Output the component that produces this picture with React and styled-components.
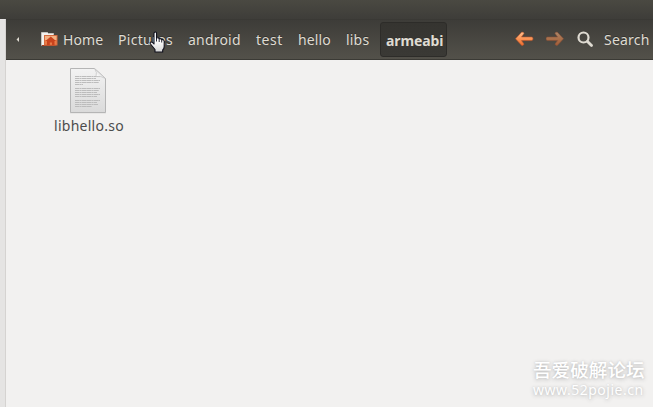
import React from 'react';
import styled, { createGlobalStyle } from 'styled-components';

const Global = createGlobalStyle`
  * { box-sizing: border-box; }
  body { margin: 0; overflow: hidden; font-family: "Noto Sans", "Open Sans", sans-serif; }
  svg { display: block; flex: none; }
`;

const Window = styled.div`
  position: relative;
  width: 653px;
  height: 407px;
  display: flex;
  flex-direction: column;
  background: #f2f1f0;
`;

const TitleBar = styled.header`
  height: 19px;
  flex: none;
  background: linear-gradient(#4a4942, #3e3d39);
`;

const Body = styled.div`
  flex: 1;
  display: flex;
`;

const Sidebar = styled.aside`
  width: 6px;
  flex: none;
  background: #e5e4e3;
  border-right: 1px solid #d5d3d1;
`;

const Main = styled.main`
  flex: 1;
  min-width: 0;
`;

const Toolbar = styled.nav`
  height: 41px;
  display: flex;
  align-items: flex-start;
  padding-top: 2px;
  border-top: 1px solid #3a3935;
  border-bottom: 1px solid #3b3a35;
  background: linear-gradient(#3d3c38, #53514a);
  color: #dfdbd2;
`;

const Scroll = styled.div`
  width: 35px;
  height: 36px;
  padding: 15px 0 0 10px;
`;

const Crumb = styled.div`
  width: ${p => p.$width}px;
  height: 36px;
  flex: none;
  display: flex;
  gap: 5px;
  white-space: nowrap;
  font-size: 14px;
  line-height: 36px;
  letter-spacing: ${p => p.$spacing || 0}px;
  text-shadow: 0 -1px #33322e;
`;

const Current = styled(Crumb)`
  height: 35px;
  padding-left: 5px;
  border: 1px solid #2d2c29;
  border-radius: 3px;
  background: linear-gradient(#353430, #3a3935);
  font-weight: 700;
  line-height: 35px;
`;

const HomeIconBox = styled.span`
  padding-top: 10px;
`;

const Tools = styled.div`
  display: flex;
  align-items: flex-start;
  margin-left: 68px;
`;

const ToolIcon = styled.div`
  width: ${p => p.$width}px;
  padding-top: 9px;
  opacity: ${p => (p.$dim ? 0.55 : 1)};
`;

const Files = styled.section`
  display: flex;
  padding: 7px 0 0 42px;
`;

const File = styled.figure`
  width: 82px;
  margin: 0;
  display: flex;
  flex-direction: column;
  align-items: center;
`;

const FileIcon = styled.div`
  margin-right: 2px;
`;

const FileName = styled.figcaption`
  margin-top: 2px;
  font-size: 14px;
  line-height: 20px;
  letter-spacing: ${p => p.$spacing}px;
  color: #4c4c4c;
  white-space: nowrap;
`;

const Pointer = styled.div`
  position: absolute;
  left: 149px;
  top: 31px;
`;

const Watermark = styled.div`
  position: absolute;
  left: 533px;
  top: 355px;
  display: flex;
  flex-direction: column;
  color: #fff;
  white-space: nowrap;
  text-shadow: 0 1px 4px #b4b4b4, 0 0 2px #d4d4d4;
`;

const ForumName = styled.div`
  font: 500 18.6px/28px "Noto Sans CJK SC", sans-serif;
`;

const ForumUrl = styled.div`
  font-size: 14px;
  line-height: 14px;
  letter-spacing: 0.5px;
`;

const HomeFolder = () => (
  <svg width="17" height="15" viewBox="0 0 17 15">
    <path d="M.5 13.500V.5h6l1 1h5V13" fill="#f3f1ee" stroke="#c4c2be" />
    <path d="M1 13.500h14" stroke="#a43d20" />
    <rect x="3.500" y="3.500" width="12.500" height="9.500" fill="#e97a46" stroke="#d36b3f" />
    <path d="M4 4h11.500v4H4z" fill="#f3b183" />
    <path d="m4.500 9 5.300-4.500L15 9h-1.500v4h-2.500v-2.500H8.800V13H6V9z" fill="#c8431d" />
  </svg>
);

const Arrow = ({ id, flip }) => (
  <svg width="19" height="16" viewBox="0 0 19 16">
    <defs>
      <linearGradient id={id} x1="0" y1="0" x2="0" y2="1">
        <stop offset="0" stopColor="#ffc090" />
        <stop offset=".5" stopColor="#fa9455" />
        <stop offset="1" stopColor="#ed6b2d" />
      </linearGradient>
    </defs>
    <path
      transform={flip ? 'translate(18 0) scale(-1 1)' : undefined}
      d="M.5 7.800 6.500 1.300Q8.300.5 9 2.500L6.500 6H16.500q1.500 0 1.500 1.800t-1.500 1.800h-10L9 13.100Q8.300 15.200 6.500 14.300z"
      fill={`url(#${id})`}
      stroke="#bd562b"
      strokeWidth=".6"
    />
  </svg>
);

const Magnifier = () => (
  <svg width="18" height="17" viewBox="-1 0 18 17">
    <circle cx="6.500" cy="6.500" r="5" fill="none" stroke="#dfdbd2" strokeWidth="2.200" />
    <path d="m10.500 10.500 4 4" stroke="#dfdbd2" strokeWidth="2.800" strokeLinecap="round" />
  </svg>
);

const textLines = [
  [8, 25], [10, 21], [12, 25], [14, 24], [16, 8],
  [20, 25], [22, 24], [24, 22], [26, 25], [28, 22],
  [32, 25], [34, 22], [36, 23], [38, 17],
];

const Document = () => (
  <svg width="38" height="47" viewBox="0 0 38 47">
    <defs>
      <linearGradient id="paper" x1="0" y1="0" x2="0" y2="1">
        <stop offset="0" stopColor="#f3f3f3" />
        <stop offset="1" stopColor="#dadada" />
      </linearGradient>
      <linearGradient id="fold" x1="0" y1="1" x2="1" y2="0">
        <stop offset=".2" stopColor="#fff" />
        <stop offset="1" stopColor="#bcbcbc" />
      </linearGradient>
    </defs>
    <path d="M1 46h36" stroke="#dedddb" />
    <path d="M1.500 1.500h24l11 10v34h-35z" fill="url(#paper)" stroke="#b5b5b5" />
    {textLines.map(([y, w]) => (
      <path key={y} d={`M6 ${y + 1.5}h${w}`} stroke="#bcbcbc" strokeDasharray="4 .4 2 .3 5 .3" />
    ))}
    <path d="M25.500 1.500q3 4 1.500 8 5-.8 9.500 2z" fill="url(#fold)" stroke="#c2c2c2" strokeWidth=".7" />
  </svg>
);

const Hand = () => (
  <svg width="18" height="23" viewBox="0 0 18 23">
    <defs>
      <linearGradient id="glove" x1="0" y1="0" x2="0" y2="1">
        <stop offset=".4" stopColor="#fff" />
        <stop offset="1" stopColor="#d5d5d5" />
      </linearGradient>
    </defs>
    <path
      d="M5 13V2.500q0-1.500 1.300-1.500T7.500 2.500V7q2-.8 2.700.7 2-.5 2.500 1 2.200-.5 2.500 1.800v5q0 2-1.500 3.500V21H6V18.500L1.500 13q-1-1.500.3-2 1.500-.3 3.200 2z"
      fill="url(#glove)"
      stroke="#10101c"
      strokeWidth="1.100"
      strokeLinejoin="round"
    />
    <path d="M7.500 7v3.500M10.200 8v3M12.700 9v2.500" stroke="#10101c" strokeWidth=".9" />
  </svg>
);

const folders = [
  { name: 'Pictures', width: 70, spacing: 0.3 },
  { name: 'android', width: 68, spacing: 0.2 },
  { name: 'test', width: 42, spacing: 0.5 },
  { name: 'hello', width: 48, spacing: 0.1 },
  { name: 'libs', width: 34, spacing: 0.2 },
];

export default function App() {
  return (
    <Window>
      <Global />
      <TitleBar />
      <Body>
        <Sidebar />
        <Main>
          <Toolbar>
            <Scroll>
              <svg width="4" height="5" viewBox="0 0 4 5"><path d="M3 0v5L.5 2.500z" fill="#dfdbd2" /></svg>
            </Scroll>
            <Crumb $width={77} $spacing={0.1}>
              <HomeIconBox><HomeFolder /></HomeIconBox>
              Home
            </Crumb>
            {folders.map(f => (
              <Crumb key={f.name} $width={f.width} $spacing={f.spacing}>{f.name}</Crumb>
            ))}
            <Current $width={67} $spacing={-0.1}>armeabi</Current>
            <Tools>
              <ToolIcon $width={31}><Arrow id="back" /></ToolIcon>
              <ToolIcon $width={30} $dim><Arrow id="forward" flip /></ToolIcon>
              <ToolIcon $width={28}><Magnifier /></ToolIcon>
              <Crumb $width={49} $spacing={0.2}>Search</Crumb>
            </Tools>
          </Toolbar>
          <Files>
            <File>
              <FileIcon><Document /></FileIcon>
              <FileName $spacing={0.25}>libhello.so</FileName>
            </File>
          </Files>
        </Main>
      </Body>
      <Pointer><Hand /></Pointer>
      <Watermark>
        <ForumName>吾爱破解论坛</ForumName>
        <ForumUrl>www.52pojie.cn</ForumUrl>
      </Watermark>
    </Window>
  );
}
